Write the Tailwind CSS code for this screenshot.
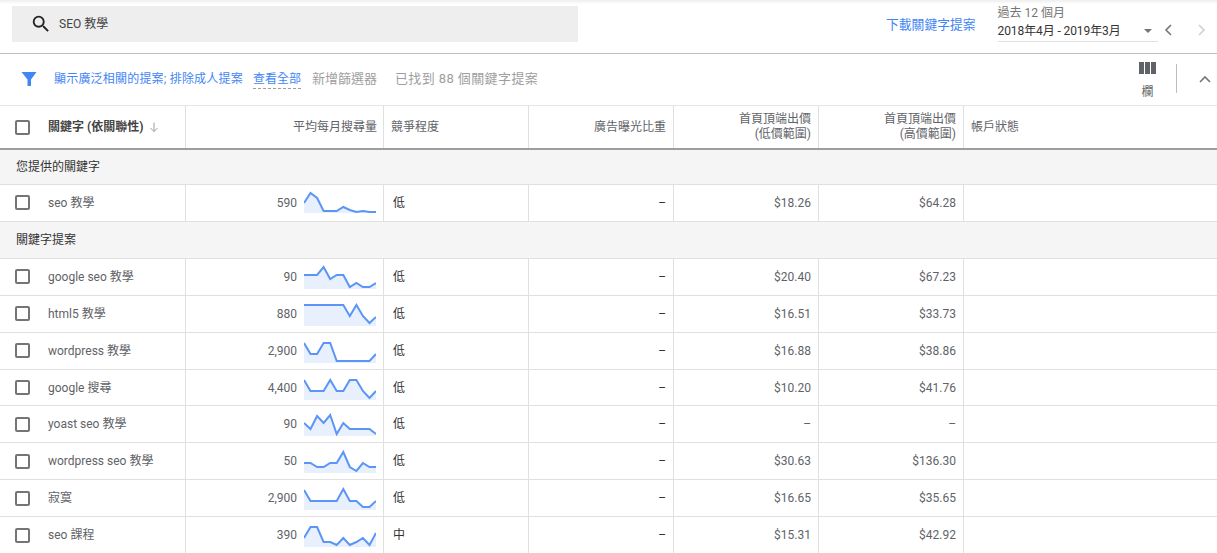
<!DOCTYPE html>
<html lang="zh-Hant">
<head>
  <meta charset="UTF-8" />
  <title>關鍵字提案</title>
  <script src="https://cdn.jsdelivr.net/npm/@tailwindcss/browser@4"></script>
</head>
<body class="h-[553px] overflow-hidden bg-white text-[12px] text-[#5f6368] font-['Roboto','Noto_Sans_CJK_TC',sans-serif]">

  <!-- top bar -->
  <div class="flex h-[54px] items-start border-b border-[#bdbdbd] bg-gradient-to-b from-[#eeeeee] to-white to-[4px]">
    <div class="mt-[6px] ml-[12px] flex h-[36px] w-[566px] items-center bg-[#eeeeee] pl-[18px] text-[#444]">
      <svg class="h-[22px] w-[22px]" viewBox="0 0 24 24" fill="#222"><path d="M15.5 14h-.79l-.28-.27A6.47 6.47 0 0 0 16 9.5 6.5 6.5 0 1 0 9.5 16c1.61 0 3.09-.59 4.23-1.57l.27.28v.79l5 4.99L20.49 19l-4.99-5zm-6 0C7.01 14 5 11.99 5 9.5S7.01 5 9.5 5 14 7.01 14 9.5 11.99 14 9.5 14z"/></svg>
      <span class="ml-[7px]">SEO 教學</span>
    </div>
    <a class="mt-[15px] ml-[308px] text-[12.8px] text-[#4285f4]">下載關鍵字提案</a>
    <div class="mt-[6px] ml-[22px] w-[160px]">
      <div class="text-[12px] leading-[15px] text-[#757575]">過去 12 個月</div>
      <div class="mt-[2px] flex h-[19px] items-center justify-between border-b border-[#e0e0e0] pb-[3px] text-[12px] tracking-[-0.1px] text-[#333]">
        <span>2018年4月 - 2019年3月</span>
        <span class="mr-[6px] h-0 w-0 border-x-[4px] border-t-[4px] border-x-transparent border-t-[#757575]"></span>
      </div>
    </div>
    <div class="mt-[21px] ml-[2px] flex">
      <svg class="h-[18px] w-[18px]" viewBox="0 0 18 18" fill="none" stroke="#757575" stroke-width="1.6"><path d="M11 4 6 9l5 5"/></svg>
      <svg class="ml-[14px] h-[18px] w-[18px]" viewBox="0 0 18 18" fill="none" stroke="#d0d0d0" stroke-width="1.6"><path d="m7 4 5 5-5 5"/></svg>
    </div>
  </div>

  <!-- filter bar -->
  <div class="relative flex h-[52px] items-center border-b border-[#e6e6e6] pb-[1px]">
    <svg class="ml-[20px] h-[18px] w-[18px]" viewBox="0 0 18 18" fill="#4285f4"><path d="M1.5 2h15L11 9.5V16H7.5V9.500z"/></svg>
    <span class="ml-[16px] tracking-[0.2px] text-[#4285f4]">顯示廣泛相關的提案; 排除成人提案</span>
    <span class="ml-[10px] border-b border-dashed border-[#9e9e9e] text-[#4285f4]">查看全部</span>
    <span class="ml-[11px] text-[13px] text-[#9e9e9e]">新增篩選器</span>
    <span class="ml-[18px] text-[13px] tracking-[0.4px] text-[#9e9e9e]">已找到 88 個關鍵字提案</span>
    <div class="ml-auto mr-[61px] flex flex-col items-center pt-[4px] text-[#5f6368]">
      <svg class="h-[14px] w-[17px]" viewBox="0 0 17 14" fill="#5f6368"><path d="M0 1h5v12H0zM6 1h5v12H6zM12 1h5v12h-5z"/></svg>
      <span class="mt-[8px]">欄</span>
    </div>
    <div class="absolute top-[10px] right-[40px] h-[29px] w-px bg-[#bdbdbd]"></div>
    <svg class="absolute top-[16px] right-[3px] h-[18px] w-[18px]" viewBox="0 0 18 18" fill="none" stroke="#757575" stroke-width="1.6"><path d="m4 12 5-5 5 5"/></svg>
  </div>

  <!-- table header -->
  <div class="grid h-[44px] grid-cols-[186px_198px_145px_145px_145px_145px_1fr] border-b-2 border-[#9e9e9e] leading-[15px]">
    <div class="flex items-center border-r border-[#e0e0e0] pl-[15px]">
      <span class="h-[15px] w-[15px] rounded-[2px] border-2 border-[#757575]"></span>
      <span class="ml-[18px] font-bold text-[#444]">關鍵字 (依關聯性)</span>
      <svg class="ml-[5px] h-[12px] w-[12px]" viewBox="0 0 12 12" fill="none" stroke="#9e9e9e"><path d="M6 1.500v9M2.500 7 6 10.500 9.500 7"/></svg>
    </div>
    <div class="flex items-center justify-end border-r border-[#e0e0e0] pr-[6px]">平均每月搜尋量</div>
    <div class="flex items-center border-r border-[#e0e0e0] pl-[7px]">競爭程度</div>
    <div class="flex items-center justify-end border-r border-[#e0e0e0] pr-[7px]">廣告曝光比重</div>
    <div class="flex items-center justify-end border-r border-[#e0e0e0] pr-[7px] text-right">首頁頂端出價<br />(低價範圍)</div>
    <div class="flex items-center justify-end border-r border-[#e0e0e0] pr-[7px] text-right">首頁頂端出價<br />(高價範圍)</div>
    <div class="flex items-center pl-[7px]">帳戶狀態</div>
  </div>

  <div id="rows"></div>

  <script>
    const groups = [
      ["您提供的關鍵字", 35, [
        ["seo 教學", "590", [12,2,7,20,20,20,16,19,21,20,21,21], "低", "$18.26", "$64.28", 22]
      ]],
      ["關鍵字提案", 37, [
        ["google seo 教學", "90", [10,10,10,2,14,10,10,22,18,22,22,18], "低", "$20.40", "$67.23"],
        ["html5 教學", "880", [3,3,3,3,3,3,3,14,3,14,21,15], "低", "$16.51", "$33.73"],
        ["wordpress 教學", "2,900", [4,15,15,4,4,22,22,22,22,22,22,15], "低", "$16.88", "$38.86"],
        ["google 搜尋", "4,400", [4,15,15,15,4,15,15,4,4,15,22,15], "低", "$10.20", "$41.76"],
        ["yoast seo 教學", "90", [11,17,4,11,3,22,11,17,17,17,17,22], "低", "–", "–"],
        ["wordpress seo 教學", "50", [14,14,18,18,14,14,3,18,22,14,18,18], "低", "$30.63", "$136.30"],
        ["寂寞", "2,900", [4,15,15,15,15,15,3,15,15,21,21,15], "低", "$16.65", "$35.65"],
        ["seo 課程", "390", [15,4,4,19,19,22,15,22,19,15,22,10], "中", "$15.31", "$42.92"]
      ]]
    ];

    function spark(values, base = 24) {
      const pts = values.map((y, i) => (i * 72 / 11).toFixed(1) + "," + y).join(" ");
      return `<svg class="ml-[7px] h-[24px] w-[72px]" viewBox="0 0 72 24">
        <polygon points="0,${base} ${pts} 72,${base}" fill="#e8f0fe"/>
        <polyline points="${pts}" fill="none" stroke="#5b95f5" stroke-width="2"/>
      </svg>`;
    }

    let html = "";
    for (const [title, height, rows] of groups) {
      html += `<div class="flex items-center border-b border-[#e0e0e0] bg-[#f5f5f5] pl-[16px] text-[#333]" style="height:${height}px">${title}</div>`;
      for (const [name, volume, trend, level, low, high, base] of rows) {
        html += `<div class="grid h-[36.9px] grid-cols-[186px_198px_145px_145px_145px_145px_1fr] border-b border-[#e0e0e0]">
          <div class="flex items-center border-r border-[#e0e0e0] pl-[15px]">
            <span class="h-[15px] w-[15px] rounded-[2px] border-2 border-[#757575]"></span>
            <span class="ml-[18px]">${name}</span>
          </div>
          <div class="flex items-center border-r border-[#e0e0e0] pl-[60px]">
            <span class="w-[51px] text-right">${volume}</span>${spark(trend, base)}
          </div>
          <div class="flex items-center border-r border-[#e0e0e0] pl-[9px] text-[#333]">${level}</div>
          <div class="flex items-center justify-end border-r border-[#e0e0e0] pr-[7px] text-[#333]">–</div>
          <div class="flex items-center justify-end border-r border-[#e0e0e0] pr-[7px]">${low}</div>
          <div class="flex items-center justify-end border-r border-[#e0e0e0] pr-[7px]">${high}</div>
          <div></div>
        </div>`;
      }
    }
    document.getElementById("rows").innerHTML = html;
  </script>
</body>
</html>
